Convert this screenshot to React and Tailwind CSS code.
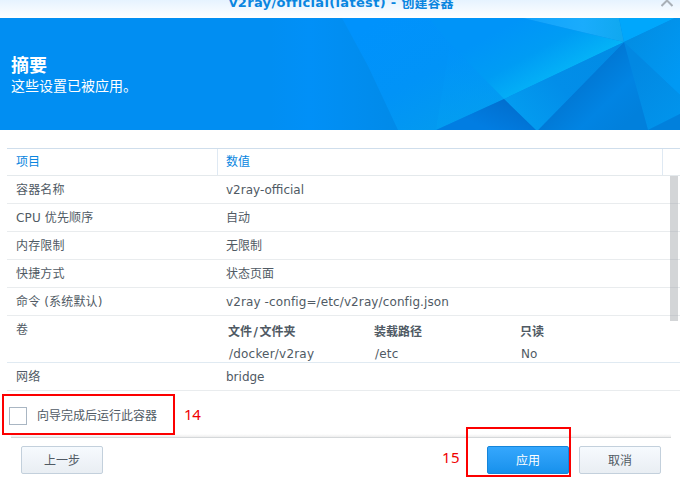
const rows = [
  ['容器名称', 'v2ray-official', ''],
  ['CPU 优先顺序', '自动', ''],
  ['内存限制', '无限制', ''],
  ['快捷方式', '状态页面', ''],
  ['命令 (系统默认)', 'v2ray -config=/etc/v2ray/config.json', 'tracking-[0.11px]'],
];

function Row({ label, className = '', children }) {
  return (
    <div className="flex h-7 border-b border-[#e9ecee] leading-[28px]">
      <div className="w-[210px] shrink-0 pl-[9px] tracking-[0.15px]">{label}</div>
      <div className={`pl-[9px] ${className}`}>{children}</div>
    </div>
  );
}

function Facets() {
  return (
    <svg className="absolute inset-0" width="680" height="112" viewBox="0 0 680 112">
      <defs>
        <linearGradient id="base" x1="270" y1="0" x2="400" y2="0" gradientUnits="userSpaceOnUse">
          <stop offset="0" stopColor="#018ef2" />
          <stop offset="0.3" stopColor="#0190f7" />
          <stop offset="1" stopColor="#018ae8" />
        </linearGradient>
        <linearGradient id="mid" x1="380" y1="0" x2="445" y2="112" gradientUnits="userSpaceOnUse">
          <stop offset="0" stopColor="#0092fc" />
          <stop offset="0.55" stopColor="#0193f7" />
          <stop offset="1" stopColor="#039aef" />
        </linearGradient>
        <linearGradient id="bright" x1="520" y1="0" x2="560" y2="72" gradientUnits="userSpaceOnUse">
          <stop offset="0" stopColor="#0094f8" />
          <stop offset="0.45" stopColor="#009cf4" />
          <stop offset="1" stopColor="#06bbf8" />
        </linearGradient>
        <linearGradient id="left" x1="450" y1="30" x2="465" y2="112" gradientUnits="userSpaceOnUse">
          <stop offset="0" stopColor="#0093fa" />
          <stop offset="1" stopColor="#03a0f1" />
        </linearGradient>
        <linearGradient id="strip" x1="624" y1="24" x2="530" y2="112" gradientUnits="userSpaceOnUse">
          <stop offset="0" stopColor="#018be4" />
          <stop offset="0.6" stopColor="#028ee9" />
          <stop offset="1" stopColor="#039cf0" />
        </linearGradient>
        <linearGradient id="dark" x1="570" y1="60" x2="620" y2="112" gradientUnits="userSpaceOnUse">
          <stop offset="0" stopColor="#0174d0" />
          <stop offset="0.6" stopColor="#0184e3" />
          <stop offset="1" stopColor="#0180dc" />
        </linearGradient>
        <linearGradient id="right" x1="630" y1="50" x2="680" y2="100" gradientUnits="userSpaceOnUse">
          <stop offset="0" stopColor="#0288e2" />
          <stop offset="1" stopColor="#0194ec" />
        </linearGradient>
        <linearGradient id="far" x1="624" y1="24" x2="680" y2="60" gradientUnits="userSpaceOnUse">
          <stop offset="0" stopColor="#028de3" />
          <stop offset="1" stopColor="#0099f4" />
        </linearGradient>
        <linearGradient id="top" x1="523" y1="0" x2="624" y2="0" gradientUnits="userSpaceOnUse">
          <stop offset="0" stopColor="#12a2fc" />
          <stop offset="0.6" stopColor="#1aacfc" />
          <stop offset="1" stopColor="#10a8ef" />
        </linearGradient>
        <linearGradient id="low" x1="504" y1="81" x2="490" y2="112" gradientUnits="userSpaceOnUse">
          <stop offset="0" stopColor="#016fcf" />
          <stop offset="1" stopColor="#017de2" />
        </linearGradient>
      </defs>
      <rect width="680" height="112" fill="url(#base)" />
      <path d="M342 0H430L624 24L504 81L437 112H398L368 48Z" fill="url(#mid)" />
      <path d="M429 0H523L624 24L504 81L450 26Z" fill="url(#bright)" />
      <path d="M450 26L504 81L436 112Z" fill="url(#left)" opacity="0.6" />
      <path d="M523 0H619L624 24Z" fill="url(#top)" />
      <path d="M619 0H675L624 24Z" fill="#00a7fc" />
      <path d="M675 0H680V77L624 24Z" fill="url(#far)" />
      <path d="M624 24L680 77V96L648 112Z" fill="url(#right)" />
      <path d="M680 96V112H648Z" fill="#0180dc" />
      <path d="M624 24L648 112H538Z" fill="url(#dark)" />
      <path d="M624 24L538 112H535L504 81Z" fill="url(#strip)" />
      <path d="M504 81L536 112H436Z" fill="url(#low)" />
    </svg>
  );
}

const plain =
  'flex h-7 w-[82px] items-center justify-center rounded-[2px] border border-[#c3d0dc] bg-linear-to-b from-[#f6fafe] to-[#e9eef3] pt-px';

export default function App() {
  return (
    <div className="relative h-[477px] w-[680px] overflow-hidden bg-white font-['DejaVu_Sans','Noto_Sans_CJK_SC',sans-serif] text-[12px] text-[#505a64]">
      <header className="flex h-[18px] justify-between overflow-hidden bg-linear-to-b from-[#e6f3ff] to-white">
        <h1 className="-mt-[8px] pl-[229px] text-[13px] leading-[22px] font-bold whitespace-nowrap text-[#0a86e0]">
          <span className="tracking-[0.33px]">v2ray/official(latest) - </span>创建容器
        </h1>
        <svg className="mr-[7px]" width="12" height="7" viewBox="0 0 12 7">
          <path d="M0.5 6L6 0.5L11.5 6" fill="none" stroke="#a9b0b7" strokeWidth="2" />
        </svg>
      </header>

      <section className="relative h-28 overflow-hidden text-white">
        <Facets />
        <div className="relative pt-[36px] pl-[11px]">
          <h2 className="text-[18px] leading-6 font-bold">摘要</h2>
          <p className="text-[14px] leading-4">这些设置已被应用。</p>
        </div>
      </section>

      <main className="mt-[18px] ml-[7px] h-[243px]">
        <div className="flex h-7 border-t border-b border-t-[#cfdeec] border-b-[#e4e9ec] leading-[27px] text-[#0a86e0]">
          <div className="w-[211px] border-r border-[#dfe9f3] pl-[9px]">项目</div>
          <div className="w-[445px] border-r border-[#dfe9f3] pl-[8px]">数值</div>
        </div>
        {rows.map(([label, value, className]) => (
          <Row key={label} label={label} className={className}>{value}</Row>
        ))}
        <div className="flex h-[47px] border-b border-[#e0eaf2]">
          <div className="w-[210px] pl-[9px] leading-[28px]">卷</div>
          <div className="grid grid-cols-[146px_146px_100px] grid-rows-[22px_22px] pt-[5px] pl-[11px] leading-[22px]">
            <b>文件<span className="px-[1.5px]">/</span>文件夹</b>
            <b>装载路径</b>
            <b>只读</b>
            <span className="pl-px tracking-[0.2px]">/docker/v2ray</span>
            <span className="pl-px tracking-[0.2px]">/etc</span>
            <span className="pl-px">No</span>
          </div>
        </div>
        <Row label="网络">bridge</Row>
      </main>
      <div className="absolute top-[176px] left-[670px] h-[145px] w-2 bg-[#9ea2a6]/45" />

      <label className="flex h-[43px] items-start pt-4 pl-[9px]">
        <span className="h-[18px] w-[18px] border border-[#a9b6c3] bg-white" />
        <span className="pl-[10px] leading-[18px]">向导完成后运行此容器</span>
      </label>
      <div className="mr-[9px] ml-[11px] h-1 border-b border-[#d5d8da] bg-linear-to-b from-white to-[#eeeeee]" />
      <footer className="flex pt-[8px] pl-[21px]">
        <button className={plain}>上一步</button>
        <button className="ml-[384px] flex h-7 w-[82px] items-center justify-center rounded-[2px] border border-[#1585da] bg-linear-to-b from-[#35a7fd] to-[#1691ec] pt-px text-white">
          应用
        </button>
        <button className={`ml-[10px] ${plain}`}>取消</button>
      </footer>

      <div className="absolute top-[394px] left-[2px] h-[41px] w-[173px] border-2 border-[#fc0000]" />
      <div className="absolute top-[427px] left-[466px] h-[50px] w-[105px] border-2 border-[#fc0000]" />
      <span className="absolute top-[404px] left-[184px] font-['Noto_Sans',sans-serif] text-[15px] leading-5 tracking-[-0.3px] text-[#f00000]">14</span>
      <span className="absolute top-[447px] left-[442px] font-['Noto_Sans',sans-serif] text-[15px] leading-5 tracking-[0.5px] text-[#f00000]">15</span>
    </div>
  );
}
